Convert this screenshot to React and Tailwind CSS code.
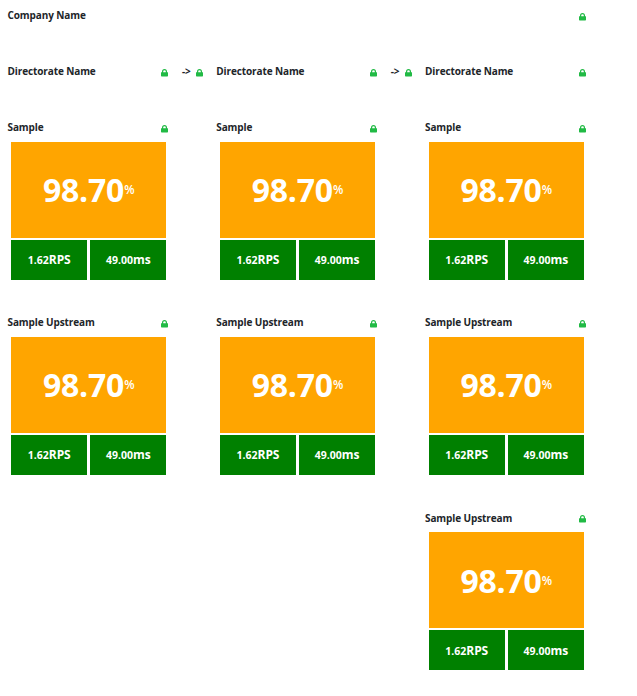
function Lock() {
  return (
    <svg viewBox="0 0 7 8" className="mt-[5px] block h-2 w-[7px] shrink-0 fill-[#21ba45]">
      <path d="M.3 3.300h.7V2.500a2.500 2.500 0 0 1 5 0v.8h.7q.3 0 .3.3v3.200q0 .7-.7.7H.7Q0 7.500 0 6.800v-3.200q0-.3.3-.3ZM2.200 3.300h2.600v-.8a1.300 1.300 0 0 0-2.600 0Z" />
    </svg>
  );
}

function Heading({ title, wide }) {
  return (
    <div className={`flex h-4 justify-between ${wide ? "w-[578px]" : "w-[160.5px]"}`}>
      <span className="pt-[0.1px] text-[10px] leading-[14px] tracking-[-0.11px]">{title}</span>
      <Lock />
    </div>
  );
}

function Directorate({ arrow }) {
  return (
    <div className="flex w-[208.75px]">
      <Heading title="Directorate Name" />
      {arrow && (
        <div className="ml-[14px] flex h-4 w-[21px] justify-between">
          <span className="text-[10px] leading-[14px] tracking-[-0.11px]">-&gt;</span>
          <Lock />
        </div>
      )}
    </div>
  );
}

function Metric({ value, unit }) {
  return (
    <div className="flex h-10 w-[76px] items-center justify-center bg-[#008000] pt-[0.2px] pl-[0.5px]">
      <span className="text-[10.5px] leading-4">{value}</span>
      <span className="text-xs leading-4 tracking-[-0.1px]">{unit}</span>
    </div>
  );
}

function Card({ title }) {
  return (
    <div className="h-[195.24px] w-[208.75px]">
      <Heading title={title} />
      <div className="mt-[6px] ml-[3.5px] w-[155px] text-white">
        <div className="flex h-24 items-center justify-center bg-[#ffa500] pt-[0.2px] pl-[0.5px]">
          <span className="text-[32px] leading-none tracking-[-0.2px]">98.70</span>
          <span className="text-xs leading-none font-semibold">%</span>
        </div>
        <div className="mt-[2px] flex gap-[3px]">
          <Metric value="1.62" unit="RPS" />
          <Metric value="49.00" unit="ms" />
        </div>
      </div>
    </div>
  );
}

const columns = [
  ["Sample", "Sample Upstream"],
  ["Sample", "Sample Upstream"],
  ["Sample", "Sample Upstream", "Sample Upstream"],
];

export default function App() {
  return (
    <div className="h-[696px] w-[637px] overflow-hidden bg-white pt-2 pl-[7.5px] font-['Open_Sans','Noto_Sans',sans-serif] font-bold text-[#212529]">
      <Heading title="Company Name" wide />
      <div className="mt-10 flex">
        <Directorate arrow />
        <Directorate arrow />
        <Directorate />
      </div>
      <div className="mt-10 flex">
        {columns.map((cards, i) => (
          <div key={i} className="w-[208.75px] shrink-0">
            {cards.map((title, j) => (
              <Card key={j} title={title} />
            ))}
          </div>
        ))}
      </div>
    </div>
  );
}
